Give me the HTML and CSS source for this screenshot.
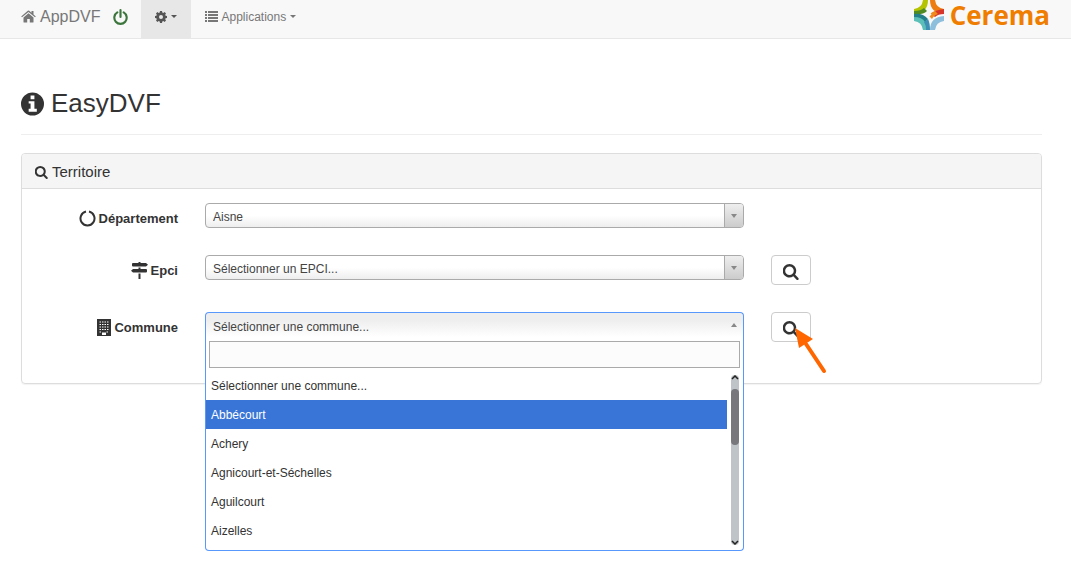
FILE: index.html
```html
<!DOCTYPE html>
<html lang="fr">
<head>
    <meta charset="UTF-8">
    <meta name="viewport" content="width=device-width, initial-scale=1.0">
    <title>AppDVF - EasyDVF</title>
    <link rel="stylesheet" href="styles.css">
</head>
<body>
    <svg class="sprite" aria-hidden="true">
        <symbol id="search" viewBox="64 128 1600 1664">
            <path d="M1152 832q0-185-131.5-316.5t-316.5-131.5-316.5 131.5-131.5 316.5 131.5 316.5 316.5 131.5 316.5-131.5 131.5-316.5zm512 832q0 52-38 90t-90 38q-54 0-90-38l-343-342q-179 124-399 124-143 0-273.5-55.5t-225-150-150-225-55.5-273.5 55.5-273.5 150-225 225-150 273.5-55.5 273.5 55.5 225 150 150 225 55.5 273.5q0 220-124 399l343 343q37 37 37 90z"/>
        </symbol>
    </svg>

    <nav class="navbar">
        <a class="brand" href="#">
            <svg class="icon-home" viewBox="0 0 15 13"><path d="M7.5 3.2l5 4.2V12q0 .6-.6.6H8.8V9H6.2v3.6H3.100q-.6 0-.6-.6V7.400zM7.500 1.900L1 7.300.2 6.400 6.800.8q.7-.5 1.400 0L10.500 2.700V1h2v3.400l2.300 2-.8.9z"/></svg>
            AppDVF
        </a>
        <a class="power" href="#" aria-label="Déconnexion">
            <svg viewBox="0 0 14 15"><path d="M4 3.200a5.800 5.800 0 1 0 6 0M7 1v6.500" fill="none" stroke="currentColor" stroke-width="2" stroke-linecap="round"/></svg>
        </a>
        <button class="nav-item active" type="button" aria-label="Paramètres">
            <svg class="icon-cog" viewBox="0 0 12 12"><path fill-rule="evenodd" d="M5 0h2l.3 1.500 1 .4 1.300-.8 1.400 1.400-.8 1.300.4 1L12 5v2l-1.400.3-.4 1 .8 1.200-1.400 1.400-1.300-.8-1 .4L7 12H5l-.3-1.500-1-.4-1.300.8L1 9.500l.8-1.200-.4-1L0 7V5l1.400-.3.4-1L1 2.500l1.400-1.400 1.300.8 1-.4zM6 4a2 2 0 1 0 0 4 2 2 0 0 0 0-4z"/></svg>
            <span class="caret"></span>
        </button>
        <button class="nav-item" type="button">
            <svg class="icon-list" viewBox="0 0 13 11"><path d="M0 0h2v2H0zM0 3h2v2H0zM0 6h2v2H0zM0 9h2v2H0zM3 0h10v2H3zM3 3h10v2H3zM3 6h10v2H3zM3 9h10v2H3z"/></svg>
            Applications
            <span class="caret"></span>
        </button>
        <a class="logo" href="#">
            <svg viewBox="0 0 30 30" class="logo-mark">
                <path fill="#b5c400" d="M9 0h5q0 13-14 14V9q8-1 9-9z"/>
                <path fill="#ee7d11" d="M16 0h5q1 8 9 9v5q-14-1-14-14z"/>
                <path fill="#5cc0b8" d="M9 30h5q0-13-14-14v5q8 1 9 9z"/>
                <path fill="#8dbfdc" d="M16 30h5q1-8 9-9v-5q-14 1-14 14z"/>
                <path fill="#d7352a" d="M30 9v5q-6 0-9 3l-4-3q4-4 13-5z"/>
                <path fill="#f08a1c" d="M21 11l3 3q-4 1-6 5l-3-3q2-4 6-5z"/>
                <path fill="#4f8a22" d="M0 14v-3q7 0 10-3l3 3q-4 4-13 3z"/>
                <path fill="#23808a" d="M0 14q9-1 14 5l-3 3q-3-5-11-5z"/>
                <path fill="#3f8fb5" d="M14 19q2 4 2 11h-4q0-5-2-8z"/>
                <path fill="#f8f8f8" d="M15 12l2.500 2.500L15 17l-2.500-2.500z"/>
            </svg>
            <span>Cerema</span>
        </a>
    </nav>

    <main class="page">
        <h1>
            <svg class="icon-info" viewBox="0 0 24 24"><path fill-rule="evenodd" d="M12 0a12 12 0 1 1 0 24 12 12 0 0 1 0-24zM10 3v4h4V3zM8 9v2.500h2V17H8v3h8.500v-3H14V9z"/></svg>
            EasyDVF
        </h1>

        <section class="panel">
            <h2 class="panel-heading">
                <svg class="icon-search"><use href="#search"/></svg>
                Territoire
            </h2>
            <form class="panel-body">
                <div class="form-row">
                    <label for="departement">
                        <svg class="icon-label" viewBox="0 0 17 17"><path d="M7 1.600a7 7 0 1 0 3 0" fill="none" stroke="currentColor" stroke-width="2"/></svg>
                        Département
                    </label>
                    <div class="select">
                        <select id="departement"><option>Aisne</option></select>
                    </div>
                </div>
                <div class="form-row">
                    <label for="epci">
                        <svg class="icon-label" viewBox="0 0 17 17"><path d="M7.500 0h2v1h5.500L17 2.700 15 4.500H2q-1 0-1-1V2q0-1 1-1h5.500zM7.500 5.500h2V7H15q1 0 1 1v1.500q0 1-1 1H2L0 8.700 2 7h5.500zM7.500 11.500h2V17h-2z"/></svg>
                        Epci
                    </label>
                    <div class="select">
                        <select id="epci"><option>Sélectionner un EPCI...</option></select>
                    </div>
                    <button class="btn" type="button" aria-label="Rechercher un EPCI">
                        <svg><use href="#search"/></svg>
                    </button>
                </div>
                <div class="form-row">
                    <label for="commune">
                        <svg class="icon-building" viewBox="0 0 14 17"><path d="M0 0h14v17H0z"/><path d="M2.500 3h9M2.500 5.500h9M2.500 8h9M2.500 10.500h9M2.500 13h2M9.500 13h2" stroke="#fff" stroke-dasharray="1.500 1"/><path fill="#fff" d="M5 13.500h4V16H5z"/></svg>
                        Commune
                    </label>
                    <div class="select open">
                        <select id="commune"><option>Sélectionner une commune...</option></select>
                        <div class="dropdown">
                            <input type="text" aria-label="Filtrer les communes">
                            <div class="results">
                                <ul role="listbox" aria-label="Communes">
                                    <li role="option">Sélectionner une commune...</li>
                                    <li role="option" class="highlighted" aria-selected="true">Abbécourt</li>
                                    <li role="option">Achery</li>
                                    <li role="option">Agnicourt-et-Séchelles</li>
                                    <li role="option">Aguilcourt</li>
                                    <li role="option">Aizelles</li>
                                </ul>
                                <div class="scrollbar">
                                    <svg viewBox="0 0 8 5"><path d="M1 4l3-3 3 3"/></svg>
                                    <div class="thumb"></div>
                                    <svg viewBox="0 0 8 5"><path d="M1 1l3 3 3-3"/></svg>
                                </div>
                            </div>
                        </div>
                    </div>
                    <button class="btn" type="button" aria-label="Rechercher une commune">
                        <svg><use href="#search"/></svg>
                        <svg class="pointer" viewBox="0 0 34 46"><path d="M12 16l18 27" stroke="#f60" stroke-width="4" stroke-linecap="round"/><path fill="#f60" d="M1 0l18 11L5 20z"/></svg>
                    </button>
                </div>
            </form>
        </section>
    </main>
</body>
</html>
```
FILE: styles.css
```css
* {
    box-sizing: border-box;
}
body {
    min-height: 100vh;
    margin: 0;
    background: #fff;
    color: #333;
    font-family: "Liberation Sans", Arial, sans-serif;
    font-size: 12px;
}
svg {
    fill: currentColor;
    flex: none;
}
.sprite {
    display: none;
}
.navbar {
    display: flex;
    height: 39px;
    padding: 0 21px;
    background: #f8f8f8;
    border-bottom: 1px solid #e7e7e7;
}
.navbar a, .nav-item {
    display: flex;
    align-items: center;
    padding-bottom: 5px;
    color: #777;
    text-decoration: none;
}
.navbar .brand {
    gap: 4px;
    font-size: 16px;
}
.icon-home {
    width: 15px;
    height: 13px;
}
.navbar .power {
    padding-left: 13px;
    padding-right: 13px;
    color: #3c763d;
}
.power svg {
    width: 15px;
    height: 16px;
}
.nav-item {
    gap: 3px;
    padding: 0 14px 5px;
    border: 0;
    background: none;
    font: inherit;
}
.nav-item.active {
    background: #e7e7e7;
    color: #555;
}
.icon-cog {
    width: 12px;
    height: 12px;
}
.icon-list {
    width: 13px;
    height: 11px;
}
.caret {
    margin-left: 1px;
    border-top: 3px solid;
    border-left: 3px solid transparent;
    border-right: 3px solid transparent;
}
.navbar .logo {
    gap: 6px;
    margin-left: auto;
    padding-bottom: 8px;
    color: #ef7d00;
    font-family: "Open Sans", sans-serif;
    font-size: 26px;
    font-weight: bold;
    line-height: 28px;
}
.logo-mark {
    width: 30px;
    height: 30px;
}
.page {
    padding: 47px 29px 0 21px;
}
h1 {
    display: flex;
    align-items: center;
    gap: 7px;
    margin: 0 0 18px;
    padding-bottom: 13px;
    border-bottom: 1px solid #eee;
    font-size: 26px;
    font-weight: normal;
    line-height: 35px;
}
.icon-info {
    width: 23px;
    height: 24px;
}
.panel {
    border: 1px solid #ddd;
    border-radius: 4px;
    box-shadow: 0 1px 1px rgba(0,0,0,0.05);
}
.panel-heading {
    display: flex;
    align-items: center;
    gap: 4px;
    margin: 0;
    padding: 10px 13px 8px;
    background: #f5f5f5;
    border-bottom: 1px solid #ddd;
    border-radius: 3px 3px 0 0;
    font-size: 15px;
    font-weight: normal;
    line-height: 16px;
}
.icon-search {
    width: 13px;
    height: 13px;
}
.panel-body {
    display: grid;
    gap: 27px;
    padding: 14px 0 41px;
}
.form-row {
    display: grid;
    grid-template-columns: 156fr 539fr 270fr;
    gap: 27px;
    align-items: start;
}
label {
    display: flex;
    align-items: center;
    justify-content: flex-end;
    gap: 3px;
    margin-top: 7px;
    font-size: 13px;
    font-weight: bold;
    line-height: 17px;
}
.icon-label {
    width: 17px;
    height: 17px;
}
.icon-building {
    width: 14px;
    height: 17px;
}
.select {
    position: relative;
}
.select select {
    display: block;
    width: 100%;
    height: 25px;
    padding: 3px 24px 0 7px;
    border: 1px solid #aaa;
    border-radius: 4px;
    appearance: none;
    background: linear-gradient(#fff 50%, #eee);
    color: #444;
    font: inherit;
}
/* arrow box on the right of a closed list */
.select::before {
    content: "";
    position: absolute;
    top: 1px;
    right: 1px;
    width: 18px;
    height: 23px;
    border-left: 1px solid #aaa;
    border-radius: 0 3px 3px 0;
    background: linear-gradient(#eee, #ccc);
}
.select::after {
    content: "";
    position: absolute;
    top: 11px;
    right: 7px;
    border-top: 4px solid #888;
    border-left: 3px solid transparent;
    border-right: 3px solid transparent;
}
.select.open::before {
    display: none;
}
.select.open::after {
    border-top: 0;
    border-bottom: 4px solid #888;
}
.select.open select {
    border-color: #5897fb;
    border-bottom: 0;
    border-radius: 4px 4px 0 0;
    background: linear-gradient(#eee 30%, #fff);
}
.dropdown {
    position: absolute;
    z-index: 1;
    top: 25px;
    left: 0;
    right: 0;
    padding: 4px 3px 5px;
    border: 1px solid #5897fb;
    border-top: 0;
    border-radius: 0 0 4px 4px;
    background: #fff;
}
.dropdown input {
    display: block;
    width: 100%;
    height: 27px;
    padding: 4px 5px;
    border: 1px solid #aaa;
    background: #fcfcfc;
    font: inherit;
}
.results {
    display: flex;
    gap: 4px;
    margin: 3px 0 0 -3px;
}
.results ul {
    flex: 1;
    margin: 0;
    padding: 0;
    list-style: none;
}
.results li {
    padding: 7px 5px 6px;
    line-height: 16px;
}
.results .highlighted {
    background: #3875d7;
    color: #fff;
}
.scrollbar {
    display: flex;
    flex-direction: column;
    width: 8px;
    margin: 4px 1px 0 0;
    border-radius: 4px;
    background: #bfc4c8;
}
.scrollbar svg {
    width: 8px;
    height: 5px;
    fill: none;
    stroke: #222;
    stroke-width: 1.5;
}
.thumb {
    height: 56px;
    margin: 9px 0 auto;
    border-radius: 4px;
    background: #77777c;
}
.btn {
    position: relative;
    display: flex;
    align-items: center;
    justify-content: center;
    width: 40px;
    height: 30px;
    padding: 3px 0 0;
    border: 1px solid #ccc;
    border-radius: 4px;
    background: #fff;
    color: #333;
}
.btn svg {
    width: 16px;
    height: 16px;
}
.btn .pointer {
    position: absolute;
    top: 15px;
    left: 22px;
    width: 34px;
    height: 46px;
}
```
